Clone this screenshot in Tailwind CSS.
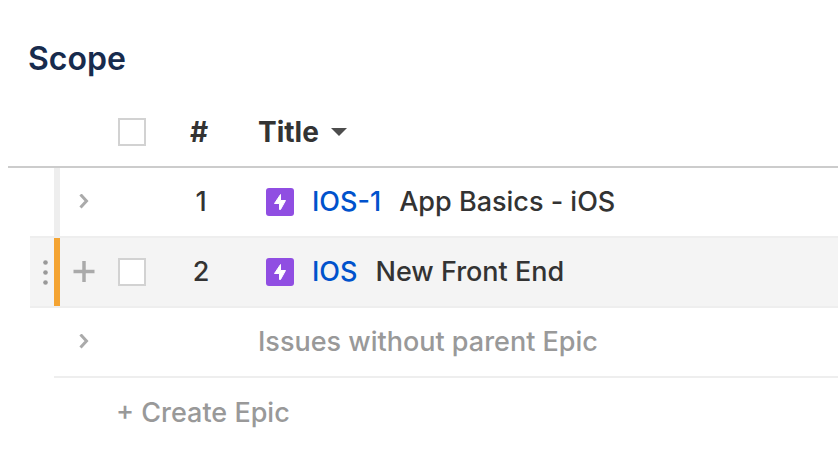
<!DOCTYPE html>
<html lang="en">

<head>
  <meta charset="UTF-8" />
  <meta name="viewport" content="width=device-width, initial-scale=1.0" />
  <title>Scope</title>
  <script src="https://cdn.jsdelivr.net/npm/@tailwindcss/browser@4"></script>
</head>

<body class="bg-white font-['Inter',sans-serif] font-[450] text-[27px] leading-9 text-[#333] overflow-x-hidden">

  <main class="pl-2 pt-[41px]">
    <h1 class="pl-5 mb-[21px] text-[32px] leading-9 font-semibold text-[#172b4d]">Scope</h1>

    <table class="w-full table-fixed border-separate border-spacing-0">
      <colgroup>
        <col class="w-[22px]" />
        <col class="w-6" />
        <col class="w-[6px]" />
        <col class="w-12" />
        <col class="w-12" />
        <col class="w-[90px]" />
        <col />
      </colgroup>
      <thead>
        <tr class="h-[70px]">
          <td colspan="4" class="border-b-2 border-[#ccc]"></td>
          <td class="border-b-2 border-[#ccc] px-[10px]">
            <input type="checkbox" aria-label="Select all"
              class="block size-7 appearance-none border-2 border-[#d2d2d2] bg-white checked:bg-[#0052cc]" />
          </td>
          <th class="border-b-2 border-[#ccc] pr-1 text-[28px] leading-9 font-bold text-center">#</th>
          <th class="border-b-2 border-[#ccc] pl-3 text-[28px] leading-9 font-bold text-left">
            <button type="button" class="flex items-center gap-3">
              Title
              <svg class="w-4 h-2" viewBox="0 0 16 8" fill="#4d4d4d">
                <path d="M0 0h16L8 8z" />
              </svg>
            </button>
          </th>
        </tr>
      </thead>
      <tbody>
        <tr class="h-[70px]">
          <td></td>
          <td class="border-b-2 border-[#eee]"></td>
          <td class="border-b-2 border-[#eee] bg-[#eee]"></td>
          <td class="border-b-2 border-[#eee]">
            <button type="button" aria-label="Expand IOS-1" class="flex w-full justify-center">
              <svg class="size-4" viewBox="0 0 16 16" fill="none" stroke="#aaa" stroke-width="3">
                <path d="M4.500 .5l6 6.500-6 6.500" />
              </svg>
            </button>
          </td>
          <td class="border-b-2 border-[#eee]"></td>
          <td class="border-b-2 border-[#eee] text-center">1</td>
          <td class="border-b-2 border-[#eee] pl-5">
            <div class="flex items-center gap-[18px] whitespace-nowrap">
              <svg class="size-7" viewBox="0 0 28 28">
                <rect width="28" height="28" rx="3" fill="#904ee2" />
                <path d="M14.500 6.500L8.500 15.500H13.500V21.500H14.500L19.500 12.500H14.500z" fill="#fff" stroke="#fff" stroke-linejoin="round" />
              </svg>
              <a href="#" class="text-[#0052cc]">IOS-1</a>
              <span>App Basics - iOS</span>
            </div>
          </td>
        </tr>
        <tr class="h-[70px]">
          <td></td>
          <td class="border-b-2 border-[#eee] bg-[#f4f4f4]">
            <button type="button" aria-label="Drag row" class="flex w-full justify-center pl-[6px]">
              <svg class="w-[6px] h-7" viewBox="0 0 6 28" fill="#999">
                <circle cx="3.500" cy="4.500" r="2.300" />
                <circle cx="3.500" cy="14.500" r="2.300" />
                <circle cx="3.500" cy="24.500" r="2.300" />
              </svg>
            </button>
          </td>
          <td class="border-b-2 border-[#eee] bg-[#f4a433]"></td>
          <td class="border-b-2 border-[#eee] bg-[#f4f4f4]">
            <button type="button" aria-label="Add child issue" class="flex w-full justify-center">
              <svg class="size-6" viewBox="0 0 24 24" fill="none" stroke="#aaa" stroke-width="3.500">
                <path d="M1.500 11.500h21M12 1v21" />
              </svg>
            </button>
          </td>
          <td class="border-b-2 border-[#eee] bg-[#f4f4f4] px-[10px]">
            <input type="checkbox" aria-label="Select IOS"
              class="block size-7 appearance-none border-2 border-[#d2d2d2] bg-white checked:bg-[#0052cc]" />
          </td>
          <td class="border-b-2 border-[#eee] bg-[#f4f4f4] text-center">2</td>
          <td class="border-b-2 border-[#eee] bg-[#f4f4f4] pl-5">
            <div class="flex items-center gap-[18px] whitespace-nowrap">
              <svg class="size-7" viewBox="0 0 28 28">
                <rect width="28" height="28" rx="3" fill="#904ee2" />
                <path d="M14.500 6.500L8.500 15.500H13.500V21.500H14.500L19.500 12.500H14.500z" fill="#fff" stroke="#fff" stroke-linejoin="round" />
              </svg>
              <a href="#" class="text-[#0052cc]">IOS</a>
              <span>New Front End</span>
            </div>
          </td>
        </tr>
        <tr class="h-[70px]">
          <td colspan="2"></td>
          <td class="border-b-2 border-[#eee]"></td>
          <td class="border-b-2 border-[#eee]">
            <button type="button" aria-label="Expand issues without parent" class="flex w-full justify-center">
              <svg class="size-4" viewBox="0 0 16 16" fill="none" stroke="#aaa" stroke-width="3">
                <path d="M4.500 .5l6 6.500-6 6.500" />
              </svg>
            </button>
          </td>
          <td class="border-b-2 border-[#eee]"></td>
          <td class="border-b-2 border-[#eee]"></td>
          <td class="border-b-2 border-[#eee] pl-3 text-[#999] whitespace-nowrap">Issues without parent Epic</td>
        </tr>
      </tbody>
    </table>

    <button type="button" class="flex h-[70px] items-center pl-[108px] text-[#999]">+ Create Epic</button>
  </main>

</body>

</html>
